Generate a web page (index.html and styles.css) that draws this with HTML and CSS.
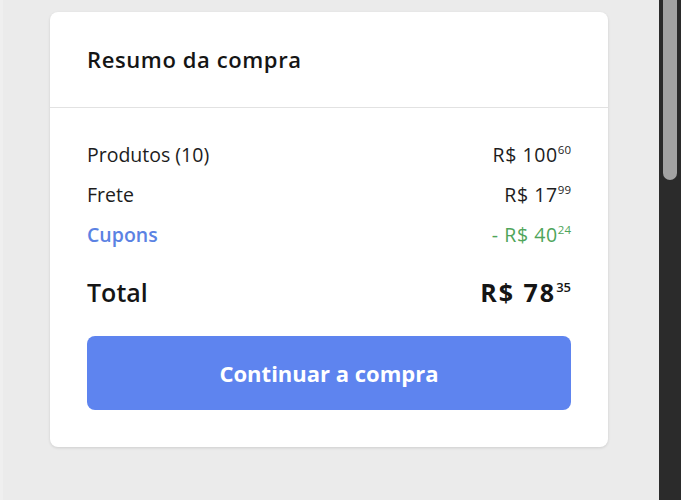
FILE: index.html
```html
<!DOCTYPE html>
<html lang="pt-BR">
<head>
  <meta charset="UTF-8">
  <meta name="viewport" content="width=device-width, initial-scale=1.0">
  <title>Resumo da compra</title>
  <link rel="stylesheet" href="styles.css">
</head>
<body>
  <div class="page">
    <main class="content">
      <div class="summary">
        <div class="summary-header">
          <h2>Resumo da compra</h2>
        </div>

        <div class="summary-body">
          <div class="row">
            <span>Produtos (10)</span>
            <span class="price">R$ 100<sup>60</sup></span>
          </div>
          <div class="row">
            <span>Frete</span>
            <span class="price">R$ 17<sup>99</sup></span>
          </div>
          <div class="row">
            <span class="coupon">Cupons</span>
            <span class="price discount">- R$ 40<sup>24</sup></span>
          </div>

          <div class="row total">
            <span>Total</span>
            <span class="price">R$ 78<sup>35</sup></span>
          </div>

          <a href="#" class="btn-continue">Continuar a compra</a>
        </div>
      </div>
    </main>

    <div class="scrollbar">
      <div class="scrollbar-thumb"></div>
    </div>
  </div>
</body>
</html>
```

FILE: styles.css
```css
html, body {
  margin: 0;
  height: 100%;
}
body {
  font-family: "Open Sans", Arial, sans-serif;
  color: #1d1d1d;
  background-color: #ebebeb;
}
.page {
  display: flex;
  height: 100%;
}
.content {
  flex: 1;
  padding: 12px 51px 0 47px;
  border-left: 3px solid #efefef;
}
.summary {
  background-color: #fff;
  border-radius: 8px;
  box-shadow: 0 1px 3px rgba(0, 0, 0, 0.12);
}
.summary-header {
  padding: 34px 37px;
  border-bottom: 1px solid #e2e2e2;
}
.summary-header h2 {
  margin: 0;
  font-size: 22px;
  line-height: 27px;
  font-weight: 600;
  letter-spacing: 0.6px;
  color: #151515;
}
.summary-body {
  padding: 27px 37px 37px;
}
.row {
  display: flex;
  justify-content: space-between;
  align-items: baseline;
  font-size: 19.5px;
  line-height: 40px;
}
.price {
  letter-spacing: 0.6px;
}
.price sup {
  font-size: 11.5px;
  line-height: 0;
  letter-spacing: 0;
  vertical-align: 8px;
}
.coupon {
  color: #5b82e3;
  font-weight: 600;
}
.discount {
  color: #4fa55a;
}
.total {
  margin-top: 17px;
  font-size: 25px;
  font-weight: 600;
  color: #151515;
}
.total .price {
  font-weight: 700;
  letter-spacing: 2px;
}
.total .price sup {
  font-size: 13px;
  font-weight: 600;
  vertical-align: 10px;
}
.btn-continue {
  display: block;
  margin-top: 24px;
  height: 74px;
  line-height: 74px;
  border-radius: 8px;
  background-color: #5e84ef;
  color: #fff;
  text-align: center;
  text-decoration: none;
  font-size: 22px;
  font-weight: 700;
}
.scrollbar {
  width: 22px;
  background-color: #2b2b2b;
  display: flex;
  justify-content: center;
}
.scrollbar-thumb {
  width: 14px;
  height: 180px;
  background-color: #a3a3a3;
  border-radius: 0 0 7px 7px;
}
```
